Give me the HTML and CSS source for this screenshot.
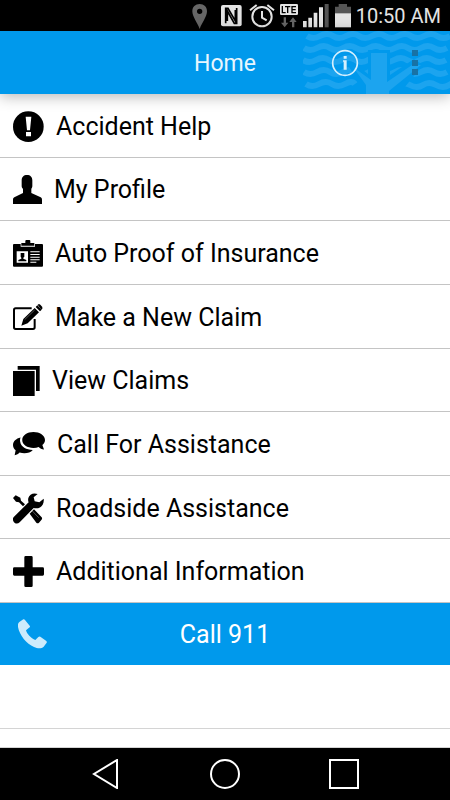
FILE: index.html
```html
<!DOCTYPE html>
<html lang="en">
<head>
  <meta charset="utf-8">
  <meta name="viewport" content="width=device-width, initial-scale=1">
  <title>Home</title>
  <link rel="stylesheet" href="styles.css">
</head>
<body>
  <div class="status-bar">
    <svg width="24" height="31" viewBox="33 0 72 93">
      <path fill="#666" fill-rule="evenodd" d="M56 12C43 12 34 21 34 34c0 16 14 32 22 53 8-21 22-37 22-53 0-13-9-22-22-22zm0 14a8 8 0 1 1 0 16 8 8 0 0 1 0-16z"/>
    </svg>
    <svg width="22" height="31" viewBox="120 0 66 93">
      <rect x="120" y="15" width="62" height="64" rx="6" fill="#e4e4e4"/>
      <path d="M134 70V25h7l22 38V30M167 24v46h-7L139 33v30" fill="none" stroke="#000" stroke-width="5"/>
    </svg>
    <svg width="27" height="31" viewBox="201 0 81 93">
      <g fill="none" stroke="#e4e4e4" stroke-width="6">
        <circle cx="243" cy="50" r="29"/>
        <path d="M243 33v20l14 8M207 31l20-16M259 15l20 16"/>
      </g>
    </svg>
    <svg width="18" height="31" viewBox="297 0 54 93">
      <rect x="297" y="12" width="54" height="33" rx="4" fill="#e4e4e4"/>
      <path d="M304 18v20h10M312 20h16M320 20v19M345 20h-12v18h12M333 29h11" fill="none" stroke="#000" stroke-width="4"/>
      <path d="M308 52h7v16h7l-11 14-11-14h8zM333 82h7V66h7l-11-14-11 14h8z" fill="#666"/>
    </svg>
    <svg width="27" height="31" viewBox="366 0 81 93">
      <path fill="#e4e4e4" d="M366 63h11v19h-11zM382 53h11v29h-11zM398 38h11v44h-11zM414 22h12v60h-12z"/>
      <path fill="#555" d="M431 12h12v70h-12z"/>
    </svg>
    <svg width="16" height="31" viewBox="462 0 48 93">
      <path fill="#555" d="M473 12h25v8h12v22h-48V20h11z"/>
      <path fill="#e4e4e4" d="M462 40h48v42h-48z"/>
    </svg>
    <span class="clock">10:50 AM</span>
  </div>

  <header class="header">
    <svg class="header-art" viewBox="0 0 147 63">
      <g fill="none" stroke="#1ca4ef" stroke-width="6">
        <path d="M4 5q6 4 13 0t13 0 13 0 13 0 13 0 13 0 13 0 13 0 13 0 13 0 13 0"/>
        <path d="M1 17q6 4 13 0t13 0 13 0 13 0 13 0 13 0 13 0 13 0 13 0 13 0 13 0"/>
        <path d="M0 29q6 4 13 0t13 0 13 0 13 0 13 0 13 0 13 0 13 0 13 0 13 0 13 0"/>
        <path d="M1 41q6 4 13 0t13 0 13 0 13 0 13 0 13 0 13 0 13 0 13 0 13 0 13 0"/>
        <path d="M3 53q6 4 13 0t13 0 13 0 10 0M94 54q6-4 13 0t13 0 13 0 13 0 13 0"/>
      </g>
      <path fill="#0099ec" d="M65 19h22v25l24-16 9 6-24 29H60V57L46 36l4-5 15 12z"/>
      <path fill="#1ca4ef" d="M68 22h16v29l25-17h9L86 60v3H63V54L50 36l18 13z"/>
    </svg>
    <h1 class="title">Home</h1>
    <div class="header-actions">
      <button class="icon-btn" aria-label="Information">
        <svg width="28" height="28" viewBox="0 0 84 84">
          <circle cx="42" cy="42" r="37" fill="none" stroke="#d5effd" stroke-width="5"/>
          <path fill="#d5effd" d="M38 21h9v8h-9zM36 34h11v28h-9V38h-2z"/>
        </svg>
      </button>
      <button class="icon-btn" aria-label="More options">
        <svg width="6" height="26" viewBox="0 0 6 26">
          <path fill="#1872a5" d="M0 0h6v6H0zM0 10h6v6H0zM0 19h6v6H0z"/>
        </svg>
      </button>
    </div>
  </header>

  <nav class="menu">
    <a class="menu-item" href="#accident">
      <svg width="31" height="31" viewBox="38 43 93 93">
        <circle cx="84" cy="90" r="46"/>
        <path fill="#fff" d="M76 60h17l-4 41h-9zM77 106h15v13H77z"/>
      </svg>
      Accident Help
    </a>
    <a class="menu-item" href="#profile">
      <svg width="29" height="29" viewBox="38 238 87 87">
        <path d="M64 254c0-10 6-16 16-16s16 6 16 16v17c0 5-2 6-3 9v12l28 13c3 2 4 4 4 8v12H38v-12c0-4 1-6 4-8l26-13v-12c-2-3-4-4-4-9z"/>
      </svg>
      My Profile
    </a>
    <a class="menu-item" href="#insurance">
      <svg width="30" height="27" viewBox="38 57 90 81">
        <path d="M41 69h20v8h43v-8h21q3 0 3 3v62q0 3-3 3H41q-3 0-3-3V72q0-3 3-3z"/>
        <path d="M63 66h12v-6q0-3 3-3h9q3 0 3 3v6h12v8H63z"/>
        <path fill="#fff" d="M49 91h34v34H49zM90 91h28v3H90zM90 99h28v3H90zM90 107h28v3H90zM90 115h28v3H90zM90 122h18v3H90z"/>
        <path d="M61 96h11v11l-3 3v3l9 4v4H54v-4l9-4v-3l-2-3z"/>
      </svg>
      Auto Proof of Insurance
    </a>
    <a class="menu-item" href="#new-claim">
      <svg width="30" height="27" viewBox="38 250 90 81">
        <path d="M94 263H46q-5 0-5 5v52q0 5 5 5h52q5 0 5-5v-25" fill="none" stroke="#000" stroke-width="6"/>
        <path d="M63 315l6-20 34-33 13 13-34 33zM106 259l5-5 13 13-5 5z"/>
        <path d="M112 252l4-2q3 0 10 9v4l-3 4z"/>
        <path d="M73 297l30-29" stroke="#fff" stroke-width="1"/>
      </svg>
      Make a New Claim
    </a>
    <a class="menu-item" href="#claims">
      <svg width="27" height="30" viewBox="38 60 81 90">
        <path d="M38 75h65v75H38zM52 60h66v75h-11V71H52z"/>
      </svg>
      View Claims
    </a>
    <a class="menu-item" href="#assistance">
      <svg width="32" height="24" viewBox="38 261 97 72">
        <path d="M61 277c-14 3-23 12-23 23 0 7 3 12 8 16l-3 15c7-1 11-4 15-8 17 4 32 1 40-8-20 0-36-10-38-24-1-5-1-10 1-14z"/>
        <path d="M100 261c-19 0-34 10-34 24s15 24 34 24c6 0 11-1 16-3 4 4 9 7 16 8l-5-14c5-4 8-9 8-15 0-14-16-24-35-24z"/>
      </svg>
      Call For Assistance
    </a>
    <a class="menu-item" href="#roadside">
      <svg width="31" height="31" viewBox="38 66 93 93">
        <path d="M112 69c-13-5-25 1-28 12-1 5-1 9 1 13l-44 43c-5 5-4 12 0 17s12 5 17 0l42-43c11 3 22-1 27-10 3-5 4-11 3-18l-13 11-14-3-3-12z"/>
        <path d="M38 81l8-8 14 7 2 9 12 11-6 6-12-12-9-2zM88 128l13-13 23 24q3 4-1 8l-7 8q-4 4-8 0z"/>
        <path d="M96 120l19 20" stroke="#fff" stroke-width="1"/>
      </svg>
      Roadside Assistance
    </a>
    <a class="menu-item" href="#information">
      <svg width="31" height="31" viewBox="38 253 93 93">
        <path d="M76 253h17q4 0 4 4v30h30q4 0 4 4v17q0 4-4 4H97v30q0 4-4 4H76q-4 0-4-4v-30H42q-4 0-4-4v-17q0-4 4-4h30v-30q0-4 4-4z"/>
      </svg>
      Additional Information
    </a>
  </nav>

  <a class="call-btn" href="tel:911">
    <svg class="call-icon" width="29" height="30" viewBox="54 72 87 88">
      <path fill="#cdebfc" d="M58 80l12-8q3-1 5 2l14 17q2 3 0 5l-11 9c2 10 15 24 28 29l9-9q3-3 6-1l17 12q4 3 2 6l-9 12c-7 7-18 6-29 1-22-9-44-36-48-60-1-7 0-12 4-15z"/>
    </svg>
    Call 911
  </a>
  <div class="empty-row"></div>
  <div class="empty-row last"></div>

  <footer class="nav-bar">
    <button class="nav-btn" aria-label="Back">
      <svg width="30" height="30" viewBox="0 0 30 30"><path d="M26 1v28L3 15z"/></svg>
    </button>
    <button class="nav-btn" aria-label="Home">
      <svg width="30" height="30" viewBox="0 0 30 30"><circle cx="15" cy="15" r="14"/></svg>
    </button>
    <button class="nav-btn" aria-label="Recent apps">
      <svg width="30" height="30" viewBox="0 0 30 30"><path d="M1 1h28v28H1z"/></svg>
    </button>
  </footer>
</body>
</html>
```
FILE: styles.css
```css
* {
  box-sizing: border-box;
}
body {
  margin: 0;
  min-height: 100vh;
  display: flex;
  flex-direction: column;
  background: #fff;
  color: #000;
  font-family: Roboto, sans-serif;
}
svg {
  display: block;
  flex: none;
}
button {
  padding: 0;
  border: none;
  background: none;
  cursor: pointer;
}

/* status bar */
.status-bar {
  display: flex;
  align-items: center;
  justify-content: flex-end;
  gap: 5px;
  height: 31px;
  padding-right: 9px;
  background: #000;
}
.clock {
  color: #e4e4e4;
  font-size: 20px;
  line-height: 32px;
  white-space: nowrap;
}

/* header */
.header {
  position: relative;
  display: grid;
  grid-template-columns: 1fr auto 1fr;
  align-items: center;
  height: 63px;
  background: #0099ec;
  box-shadow: 0 2px 14px rgba(0, 0, 0, 0.3);
}
.header-art {
  position: absolute;
  top: 0;
  right: 0;
  width: 147px;
  height: 63px;
}
.title {
  grid-column: 2;
  margin: 0;
  padding-top: 2px;
  color: #e8f6fe;
  font-size: 23px;
  font-weight: 400;
  line-height: 28px;
}
.header-actions {
  position: relative;
  display: flex;
  align-items: center;
  justify-content: flex-end;
  gap: 53px;
  padding-right: 32px;
}

/* menu */
.menu {
  flex: 1;
  display: grid;
  grid-auto-rows: 1fr;
}
.menu-item {
  display: flex;
  align-items: center;
  gap: 12px;
  min-height: 48px;
  padding: 2px 13px 0;
  border-bottom: 1px solid #c4c4c4;
  color: #000;
  font-size: 25px;
  text-decoration: none;
}
.call-btn {
  position: relative;
  display: flex;
  align-items: center;
  justify-content: center;
  height: 62px;
  background: #0099ec;
  color: #fff;
  font-size: 25px;
  text-decoration: none;
}
.call-icon {
  position: absolute;
  left: 18px;
}
.empty-row {
  height: 64px;
  border-bottom: 1px solid #d4d4d4;
}
.empty-row.last {
  height: 19px;
}

/* bottom navigation */
.nav-bar {
  display: flex;
  align-items: center;
  justify-content: center;
  gap: 89px;
  height: 52px;
  background: #000;
}
.nav-btn svg {
  fill: none;
  stroke: #fff;
  stroke-width: 2;
}
```
